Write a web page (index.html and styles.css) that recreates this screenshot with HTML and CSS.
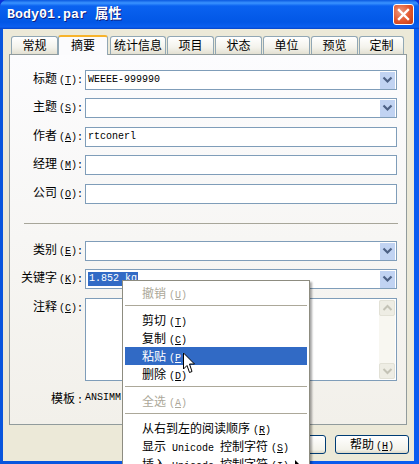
FILE: index.html
```html
<!DOCTYPE html>
<html lang="zh">
<head>
<meta charset="utf-8">
<title>Body01.par 属性</title>
<link rel="stylesheet" href="styles.css">
</head>
<body>
<div class="window">
  <header class="titlebar">
    <span class="title">Body01.par 属性</span>
    <button class="close" aria-label="关闭">
      <svg width="13" height="13" viewBox="0 0 13 13"><path d="M2 2 L11 11 M11 2 L2 11" stroke="#fff" stroke-width="2.4" stroke-linecap="square" fill="none"/></svg>
    </button>
  </header>
  <div class="client">
    <nav class="tabs">
      <span class="tab">常规</span>
      <span class="tab active">摘要</span>
      <span class="tab wide">统计信息</span>
      <span class="tab">项目</span>
      <span class="tab">状态</span>
      <span class="tab">单位</span>
      <span class="tab">预览</span>
      <span class="tab">定制</span>
    </nav>
    <section class="panel">
      <div class="row"><label class="label">标题<span class="key">(<u>T</u>):</span></label>
        <div class="field"><span class="value">WEEEE-999990</span><span class="drop"><svg width="11" height="8" viewBox="0 0 11 8"><path d="M1.5 1.5 L5.5 5.5 L9.5 1.5" stroke="#4d6185" stroke-width="2.2" fill="none"/></svg></span></div></div>
      <div class="row gap-wide"><label class="label">主题<span class="key">(<u>S</u>):</span></label>
        <div class="field"><span class="value"></span><span class="drop"><svg width="11" height="8" viewBox="0 0 11 8"><path d="M1.5 1.5 L5.5 5.5 L9.5 1.5" stroke="#4d6185" stroke-width="2.2" fill="none"/></svg></span></div></div>
      <div class="row"><label class="label">作者<span class="key">(<u>A</u>):</span></label>
        <div class="field"><span class="value">rtconerl</span></div></div>
      <div class="row gap-wide"><label class="label">经理<span class="key">(<u>M</u>):</span></label>
        <div class="field"></div></div>
      <div class="row"><label class="label">公司<span class="key">(<u>O</u>):</span></label>
        <div class="field"></div></div>
      <hr class="divider">
      <div class="row"><label class="label">类别<span class="key">(<u>E</u>):</span></label>
        <div class="field"><span class="value"></span><span class="drop"><svg width="11" height="8" viewBox="0 0 11 8"><path d="M1.5 1.5 L5.5 5.5 L9.5 1.5" stroke="#4d6185" stroke-width="2.2" fill="none"/></svg></span></div></div>
      <div class="row gap-wide"><label class="label">关键字<span class="key">(<u>K</u>):</span></label>
        <div class="field"><span class="value"><span class="selected">1.852 kg</span></span><span class="drop"><svg width="11" height="8" viewBox="0 0 11 8"><path d="M1.5 1.5 L5.5 5.5 L9.5 1.5" stroke="#4d6185" stroke-width="2.2" fill="none"/></svg></span></div></div>
      <div class="row gap-notes"><label class="label">注释<span class="key">(<u>C</u>):</span></label>
        <div class="field notes">
          <div class="scrollbar">
            <span class="sbtn"><svg width="11" height="8" viewBox="0 0 11 8"><path d="M1.5 6 L5.5 2 L9.5 6" stroke="#c4c3b6" stroke-width="2" fill="none"/></svg></span>
            <span class="sbtn"><svg width="11" height="8" viewBox="0 0 11 8"><path d="M1.5 2 L5.5 6 L9.5 2" stroke="#c4c3b6" stroke-width="2" fill="none"/></svg></span>
          </div>
        </div></div>
      <div class="row template"><span class="label">模板<span class="key">:</span></span><span class="mono">ANSIMM</span></div>
    </section>
    <footer class="footer">
      <button class="btn">取消</button>
      <button class="btn">帮助<span class="key">(<u>H</u>)</span></button>
    </footer>
  </div>

  <ul class="menu">
    <li class="item off">撤销<span class="key">(<u>U</u>)</span></li>
    <li class="sep"></li>
    <li class="item">剪切<span class="key">(<u>T</u>)</span></li>
    <li class="item">复制<span class="key">(<u>C</u>)</span></li>
    <li class="item hot">粘贴<span class="key">(<u>P</u>)</span></li>
    <li class="item">删除<span class="key">(<u>D</u>)</span></li>
    <li class="sep"></li>
    <li class="item off">全选<span class="key">(<u>A</u>)</span></li>
    <li class="sep"></li>
    <li class="item">从右到左的阅读顺序<span class="key">(<u>R</u>)</span></li>
    <li class="item">显示<span class="word">Unicode</span>控制字符<span class="key">(<u>S</u>)</span></li>
    <li class="item">插入<span class="word">Unicode</span>控制字符<span class="key">(<u>I</u>)</span><span class="arrow"></span></li>
  </ul>

  <svg class="cursor" width="14" height="24" viewBox="0 0 14 24"><path d="M1.5 1 V17 L5 13.5 L7.5 20.5 L10 19.5 L7.5 12 H12.5 Z" fill="#fff" stroke="#000" stroke-width="1"/></svg>
</div>
</body>
</html>
```
FILE: styles.css
```css
* { box-sizing: border-box; }
html, body { margin: 0; padding: 0; background: #0831d9; }
body { font-family: "Noto Sans CJK SC", "Liberation Sans", sans-serif; font-size: 12px; color: #000; }

.window {
  position: relative;
  width: 419px;
  height: 464px;
  overflow: hidden;
  display: flex;
  flex-direction: column;
  background: linear-gradient(90deg, #0855dd 0, #0a5cf0 100%);
  border-radius: 7px 7px 0 0;
}

.titlebar {
  height: 29px;
  flex: none;
  display: flex;
  align-items: center;
  justify-content: space-between;
  padding: 0 5px 0 7px;
  background: linear-gradient(180deg, #0a59e0 0, #3a93ff 3px, #0a62f0 6px, #0257e6 22px, #0a5ff0 27px, #0544c8 29px);
}
.title {
  font-family: "Liberation Mono", "Noto Sans CJK SC", monospace;
  font-weight: bold;
  font-size: 13.33px;
  line-height: 16px;
  color: #fff;
  text-shadow: 1px 1px 0 #0f1f80;
}
.close {
  width: 21px;
  height: 21px;
  padding: 0;
  display: flex;
  align-items: center;
  justify-content: center;
  border: 1px solid #fff;
  border-radius: 3px;
  background: radial-gradient(circle at 35% 35%, #ec9a80, #e2552d 55%, #c23a14);
}

.client {
  flex: 1;
  margin: 0 5px 3px 3px;
  background: #ece9d8;
  padding: 6px 7px 0 6px;
  display: flex;
  flex-direction: column;
}

.tabs {
  display: flex;
  align-items: flex-end;
  height: 19px;
  padding-left: 2px;
  gap: 1px;
  position: relative;
  z-index: 1;
}
.tab {
  width: 47px;
  height: 18px;
  border: 1px solid #91a7b4;
  border-bottom: 0;
  border-radius: 3px 3px 0 0;
  background: linear-gradient(180deg, #fff 0, #f4f3ec 60%, #e3e0d2 100%);
  text-align: center;
  line-height: 16px;
  font-size: 12px;
}
.tab:last-child { width: 45px; }
.tab.wide { width: 56px; }
.tab.active {
  width: 50px;
  height: 20px;
  margin: 0 1px -1px -1px;
  line-height: 16px;
  background: #fbfbfd;
  border-top: 2px solid #f7b32c;
}

.panel {
  width: 398px;
  height: 371px;
  border: 1px solid #919b9c;
  background: linear-gradient(180deg, #fcfcfe 0, #f2f0ea 100%);
  padding: 15px 9px 0 0;
  display: flex;
  flex-direction: column;
}

.row {
  display: flex;
  align-items: flex-start;
  gap: 2px;
  margin-bottom: 8px;
}
.row.gap-wide { margin-bottom: 9px; }
.label {
  width: 73px;
  height: 20px;
  flex: none;
  text-align: right;
  white-space: nowrap;
  line-height: 16px;
}
.key {
  font-family: "Liberation Mono", monospace;
  font-size: 10px;
  margin-left: 2px;
}
.field {
  flex: 1;
  height: 20px;
  border: 1px solid #7f9db9;
  background: #fff;
  display: flex;
  align-items: center;
  justify-content: space-between;
  padding: 0 1px 0 2px;
}
.value {
  font-family: "Liberation Mono", monospace;
  font-size: 10px;
  line-height: 14px;
  white-space: nowrap;
}
.selected { display: inline-block; background: #316ac5; color: #fff; padding: 0 1px; }
.drop {
  width: 15px;
  height: 17px;
  flex: none;
  background: #c1d3f2;
  display: flex;
  align-items: center;
  justify-content: center;
}
.divider {
  width: 374px;
  margin: 11px 0 17px 14px;
  border: 0;
  border-top: 1px solid #a7a69a;
  height: 1px;
}
.field.notes {
  height: 83px;
  justify-content: flex-end;
  align-items: stretch;
  padding: 1px;
}
.gap-notes { margin-bottom: 9px; }
.scrollbar {
  width: 16px;
  background: #f8f7f1;
  display: flex;
  flex-direction: column;
  justify-content: space-between;
}
.sbtn {
  height: 16px;
  display: flex;
  align-items: center;
  justify-content: center;
  background: #eeede4;
  border: 1px solid #e2e1d6;
  border-radius: 2px;
}
.template { margin-bottom: 0; }
.mono { font-family: "Liberation Mono", monospace; font-size: 10px; line-height: 16px; }

.footer {
  display: flex;
  justify-content: flex-end;
  gap: 9px;
  padding: 10px 0 0;
  margin-right: -2px;
}
.btn {
  width: 74px;
  height: 19px;
  padding: 0 0 1px;
  font: inherit;
  line-height: 15px;
  border: 1px solid #003c74;
  border-radius: 3px;
  background: linear-gradient(180deg, #fff 0, #f3f2ea 80%, #dcd8c8 100%);
  color: #000;
}

/* context menu floats above the dialog */
.menu {
  position: absolute;
  left: 122px;
  top: 280px;
  width: 188px;
  margin: 0;
  padding: 3px 2px;
  list-style: none;
  background: #fff;
  border: 1px solid #8d8c80;
  box-shadow: 2px 2px 2px rgba(0, 0, 0, .35);
}
.item {
  height: 18px;
  line-height: 18px;
  padding-left: 17px;
  white-space: nowrap;
  position: relative;
}
.item .key { margin-left: 3px; }
.word { font-family: "Liberation Mono", monospace; font-size: 10px; margin: 0 6px; }
.item.off { color: #aca899; }
.item.hot { background: #316ac5; color: #fff; }
.sep { height: 9px; padding-top: 3px; }
.sep::before { content: ""; display: block; height: 1px; background: #aca899; }
.arrow {
  position: absolute;
  right: 8px;
  top: 5px;
  border-left: 4px solid #000;
  border-top: 4px solid transparent;
  border-bottom: 4px solid transparent;
}
.cursor {
  position: absolute;
  left: 182px;
  top: 352px;
}
```
